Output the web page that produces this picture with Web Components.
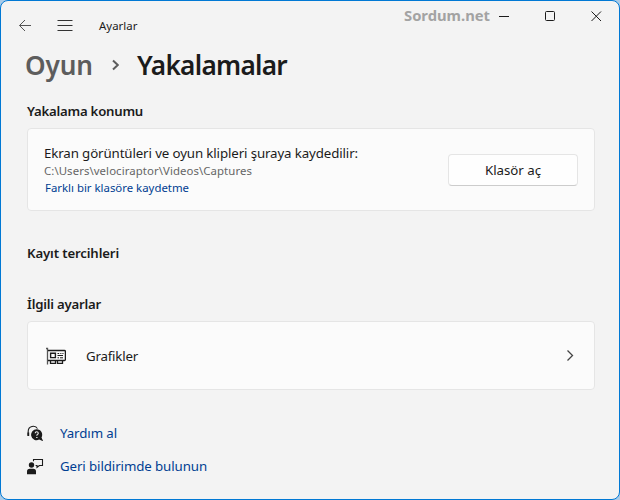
<!DOCTYPE html>
<html lang="tr">
<head>
<meta charset="utf-8">
<title>Ayarlar</title>
<style>
  body {
    margin: 0;
    background: #a9cbe8;
    font-family: "Noto Sans", "Open Sans", sans-serif;
    overflow: hidden;
  }
</style>
</head>
<body>
<settings-window>
  <title-bar slot="top"></title-bar>
  <bread-crumb>
    <fit-text size="26.2" width="68" style="color: #5d5d5d">Oyun</fit-text>
    <fit-text slot="current" size="26.2" width="150">Yakalamalar</fit-text>
  </bread-crumb>
  <settings-section style="margin-top: 21px">
    <fit-text slot="title" size="13.2" width="116">Yakalama konumu</fit-text>
    <capture-card></capture-card>
  </settings-section>
  <settings-section style="margin-top: 32px">
    <fit-text slot="title" size="13.2" width="92">Kayıt tercihleri</fit-text>
  </settings-section>
  <settings-section style="margin-top: 31px">
    <fit-text slot="title" size="13.2" width="74">İlgili ayarlar</fit-text>
    <link-card></link-card>
  </settings-section>
  <help-link style="margin-top: 33px">
    <svg slot="icon" width="17" height="17" viewBox="0 0 17 17">
      <path d="M1.2 10.5V6.4A5 5 0 0 1 10.6 4" fill="none" stroke="#1b1b1b" stroke-width="1.1"/>
      <path d="M.4 7.6H2.2V11H.4Z" fill="#1b1b1b"/>
      <path d="M9.8 4.2a5.5 5.5 0 0 1 4.7 8.2L16.2 16.2l-4.1-1.6A5.5 5.5 0 1 1 9.8 4.2Z" fill="#1b1b1b" stroke="#f3f3f3" stroke-width="1.2" paint-order="stroke"/>
      <path d="M8.2 8.2Q8.2 6.8 9.7 6.8T11.3 8.2Q11.3 9 10.2 9.6 9.8 9.9 9.8 10.8" fill="none" stroke="#f3f3f3" stroke-width="1.1"/>
      <path d="M9.2 11.9h1.3v1.2H9.2z" fill="#f3f3f3"/>
    </svg>
    <fit-text size="13.3" width="57">Yardım al</fit-text>
  </help-link>
  <help-link style="margin-top: 13px">
    <svg slot="icon" width="17" height="17" viewBox="0 0 17 17">
      <circle cx="4.5" cy="7" r="2.7" fill="#1b1b1b"/>
      <path d="M0 16.2V13.5Q0 10.7 2.8 10.7H6.3Q9 10.7 9 13.5V16.2Z" fill="#1b1b1b"/>
      <path d="M6.5 3.2V1.5H15.5V7.5H12.4L10 9.3V7.5H8.6" fill="none" stroke="#1b1b1b" stroke-width="1.1"/>
    </svg>
    <fit-text size="13.3" width="147">Geri bildirimde bulunun</fit-text>
  </help-link>
</settings-window>

<script>
// one line of text, letter-spaced to a given width
class FitText extends HTMLElement {
  constructor() {
    super();
    this.shadow = this.attachShadow({mode: 'open'});
    this.shadow.innerHTML = `
      <style>
        :host { display: block; white-space: nowrap; }
        span { display: inline-block; }
      </style>
      <span><slot></slot></span>
    `;
  }
  connectedCallback() {
    const span = this.shadow.querySelector('span');
    const width = parseFloat(this.getAttribute('width'));
    this.style.fontSize = this.getAttribute('size') + 'px';
    this.style.width = width + 'px';
    const count = this.textContent.length;
    const natural = span.getBoundingClientRect().width;
    span.style.letterSpacing = ((width - natural) / count) + 'px';
  }
}

class SettingsWindow extends HTMLElement {
  constructor() {
    super();
    this.shadow = this.attachShadow({mode: 'open'});
    this.shadow.innerHTML = `
      <style>
        :host {
          display: flex;
          flex-direction: column;
          box-sizing: border-box;
          width: 620px;
          height: 500px;
          border: 1px solid #0078d4;
          border-radius: 8px;
          background: #f3f3f3;
          color: #1b1b1b;
          overflow: hidden;
        }
        main {
          display: flex;
          flex-direction: column;
          padding: 0 24px 0 26px;
        }
      </style>
      <slot name="top"></slot>
      <main><slot></slot></main>
    `;
  }
}

class TitleBar extends HTMLElement {
  constructor() {
    super();
    this.shadow = this.attachShadow({mode: 'open'});
    this.shadow.innerHTML = `
      <style>
        :host {
          display: flex;
          justify-content: space-between;
          align-items: flex-start;
          height: 49px;
        }
        .nav {
          display: flex;
          align-items: center;
          height: 49px;
          padding-left: 17px;
        }
        .menu { margin: 0 26px 0 25px; }
        .controls {
          display: flex;
          align-items: center;
          height: 31px;
          padding-right: 17px;
        }
        .mark {
          color: #a3a3a3;
          font-weight: 700;
          line-height: 29px;
          height: 31px;
          margin-right: 9px;
        }
        svg { display: block; fill: none; stroke: #1b1b1b; }
      </style>
      <div class="nav">
        <svg width="14" height="13" viewBox="0 0 14 13"><path d="M1.5 6.5H13M7 1 1.5 6.5 7 12" stroke="#555"/></svg>
        <svg class="menu" width="16" height="13" viewBox="0 0 16 13"><path d="M.5 1.5H15.5M.5 6.5H15.5M.5 11.5H15.5" stroke="#333"/></svg>
        <fit-text size="11.4" width="38.5">Ayarlar</fit-text>
      </div>
      <div class="controls">
        <fit-text class="mark" size="14.8" width="86">Sordum.net</fit-text>
        <svg width="11" height="11" viewBox="0 0 11 11"><path d="M0 5.5H10"/></svg>
        <svg style="margin: 0 35px" width="11" height="11" viewBox="0 0 11 11"><rect x=".5" y=".5" width="9" height="9" rx="1"/></svg>
        <svg width="11" height="11" viewBox="0 0 11 11"><path d="M.5 .5 10 10M10 .5 .5 10"/></svg>
      </div>
    `;
  }
}

class BreadCrumb extends HTMLElement {
  constructor() {
    super();
    this.shadow = this.attachShadow({mode: 'open'});
    this.shadow.innerHTML = `
      <style>
        :host {
          display: flex;
          align-items: center;
          height: 30px;
          margin-left: -2px;
          line-height: 30px;
          font-weight: 600;
        }
        svg { margin: 0 17px 0 18px; }
      </style>
      <slot></slot>
      <svg width="9" height="12" viewBox="0 0 9 12"><path d="M2 1.5 6.8 6 2 10.5" fill="none" stroke="#5d5d5d" stroke-width="2"/></svg>
      <slot name="current"></slot>
    `;
  }
}

class SettingsSection extends HTMLElement {
  constructor() {
    super();
    this.shadow = this.attachShadow({mode: 'open'});
    this.shadow.innerHTML = `
      <style>
        :host { display: flex; flex-direction: column; gap: 7px; }
        header { height: 20px; line-height: 20px; font-weight: 600; }
      </style>
      <header><slot name="title"></slot></header>
      <slot></slot>
    `;
  }
}

class CaptureCard extends HTMLElement {
  constructor() {
    super();
    this.shadow = this.attachShadow({mode: 'open'});
    this.shadow.innerHTML = `
      <style>
        :host {
          display: flex;
          justify-content: space-between;
          align-items: center;
          box-sizing: border-box;
          height: 83px;
          padding: 0 16px;
          border: 1px solid #e5e5e5;
          border-radius: 4px;
          background: #fbfbfb;
        }
        .label { line-height: 19px; padding-top: 1px; }
        .path { line-height: 17px; margin-top: -1px; color: #666; }
        .change { line-height: 17px; color: #003e92; margin-left: 1px; }
        button {
          display: flex;
          align-items: center;
          justify-content: center;
          width: 130px;
          height: 32px;
          padding: 0;
          border: 1px solid #e5e5e5;
          border-bottom-color: #ccc;
          border-radius: 4px;
          background: #fefefe;
          color: #1b1b1b;
          font-family: inherit;
        }
      </style>
      <div>
        <fit-text class="label" size="13.3" width="314">Ekran görüntüleri ve oyun klipleri şuraya kaydedilir:</fit-text>
        <fit-text class="path" size="11.4" width="208">C:\\Users\\velociraptor\\Videos\\Captures</fit-text>
        <fit-text class="change" size="11.4" width="144">Farklı bir klasöre kaydetme</fit-text>
      </div>
      <button><fit-text size="13.3" width="56">Klasör aç</fit-text></button>
    `;
  }
}

class LinkCard extends HTMLElement {
  constructor() {
    super();
    this.shadow = this.attachShadow({mode: 'open'});
    this.shadow.innerHTML = `
      <style>
        :host {
          display: flex;
          align-items: center;
          box-sizing: border-box;
          height: 69px;
          padding: 0 19px 0 18px;
          border: 1px solid #e5e5e5;
          border-radius: 4px;
          background: #fbfbfb;
        }
        fit-text { margin-left: 20px; margin-right: auto; }
        svg { fill: none; stroke: #1b1b1b; }
      </style>
      <svg width="20" height="18" viewBox="0 0 20 18">
        <path d="M0 1.5H1.5V17.5" stroke="#555" stroke-width="1.3"/>
        <path d="M2 3.5H18.5Q19.4 3.5 19.4 4.5V12.5Q19.4 13.5 18.5 13.5H2" stroke-width="1.3"/>
        <path d="M4.6 6.3H9.4V10.6H4.6Z" stroke-width="1.4"/>
        <path d="M11.5 6.5H13.2M14.3 6.5H15.4M16.4 6.5H17.5M11.5 8.5H17M11.5 10.8H13M14 10.8H17" stroke-width="1"/>
        <path d="M4.5 13.5V16.3H9.5V13.5M11.5 13.5V16.3H16.5V13.5" stroke-width="1.3"/>
      </svg>
      <fit-text size="13.3" width="52">Grafikler</fit-text>
      <svg width="9" height="13" viewBox="0 0 9 13"><path d="M1.5 1.5 6.5 6.5 1.5 11.5" stroke="#444" stroke-width="1.3"/></svg>
    `;
  }
}

class HelpLink extends HTMLElement {
  constructor() {
    super();
    this.shadow = this.attachShadow({mode: 'open'});
    this.shadow.innerHTML = `
      <style>
        :host {
          display: flex;
          align-items: center;
          gap: 16px;
          height: 20px;
          line-height: 20px;
          color: #003e92;
        }
      </style>
      <slot name="icon"></slot>
      <slot></slot>
    `;
  }
}

customElements.define('settings-window', SettingsWindow);
customElements.define('title-bar', TitleBar);
customElements.define('bread-crumb', BreadCrumb);
customElements.define('settings-section', SettingsSection);
customElements.define('capture-card', CaptureCard);
customElements.define('link-card', LinkCard);
customElements.define('help-link', HelpLink);
// defined last so that every text already has its styled parent when measured
customElements.define('fit-text', FitText);
</script>
</body>
</html>
